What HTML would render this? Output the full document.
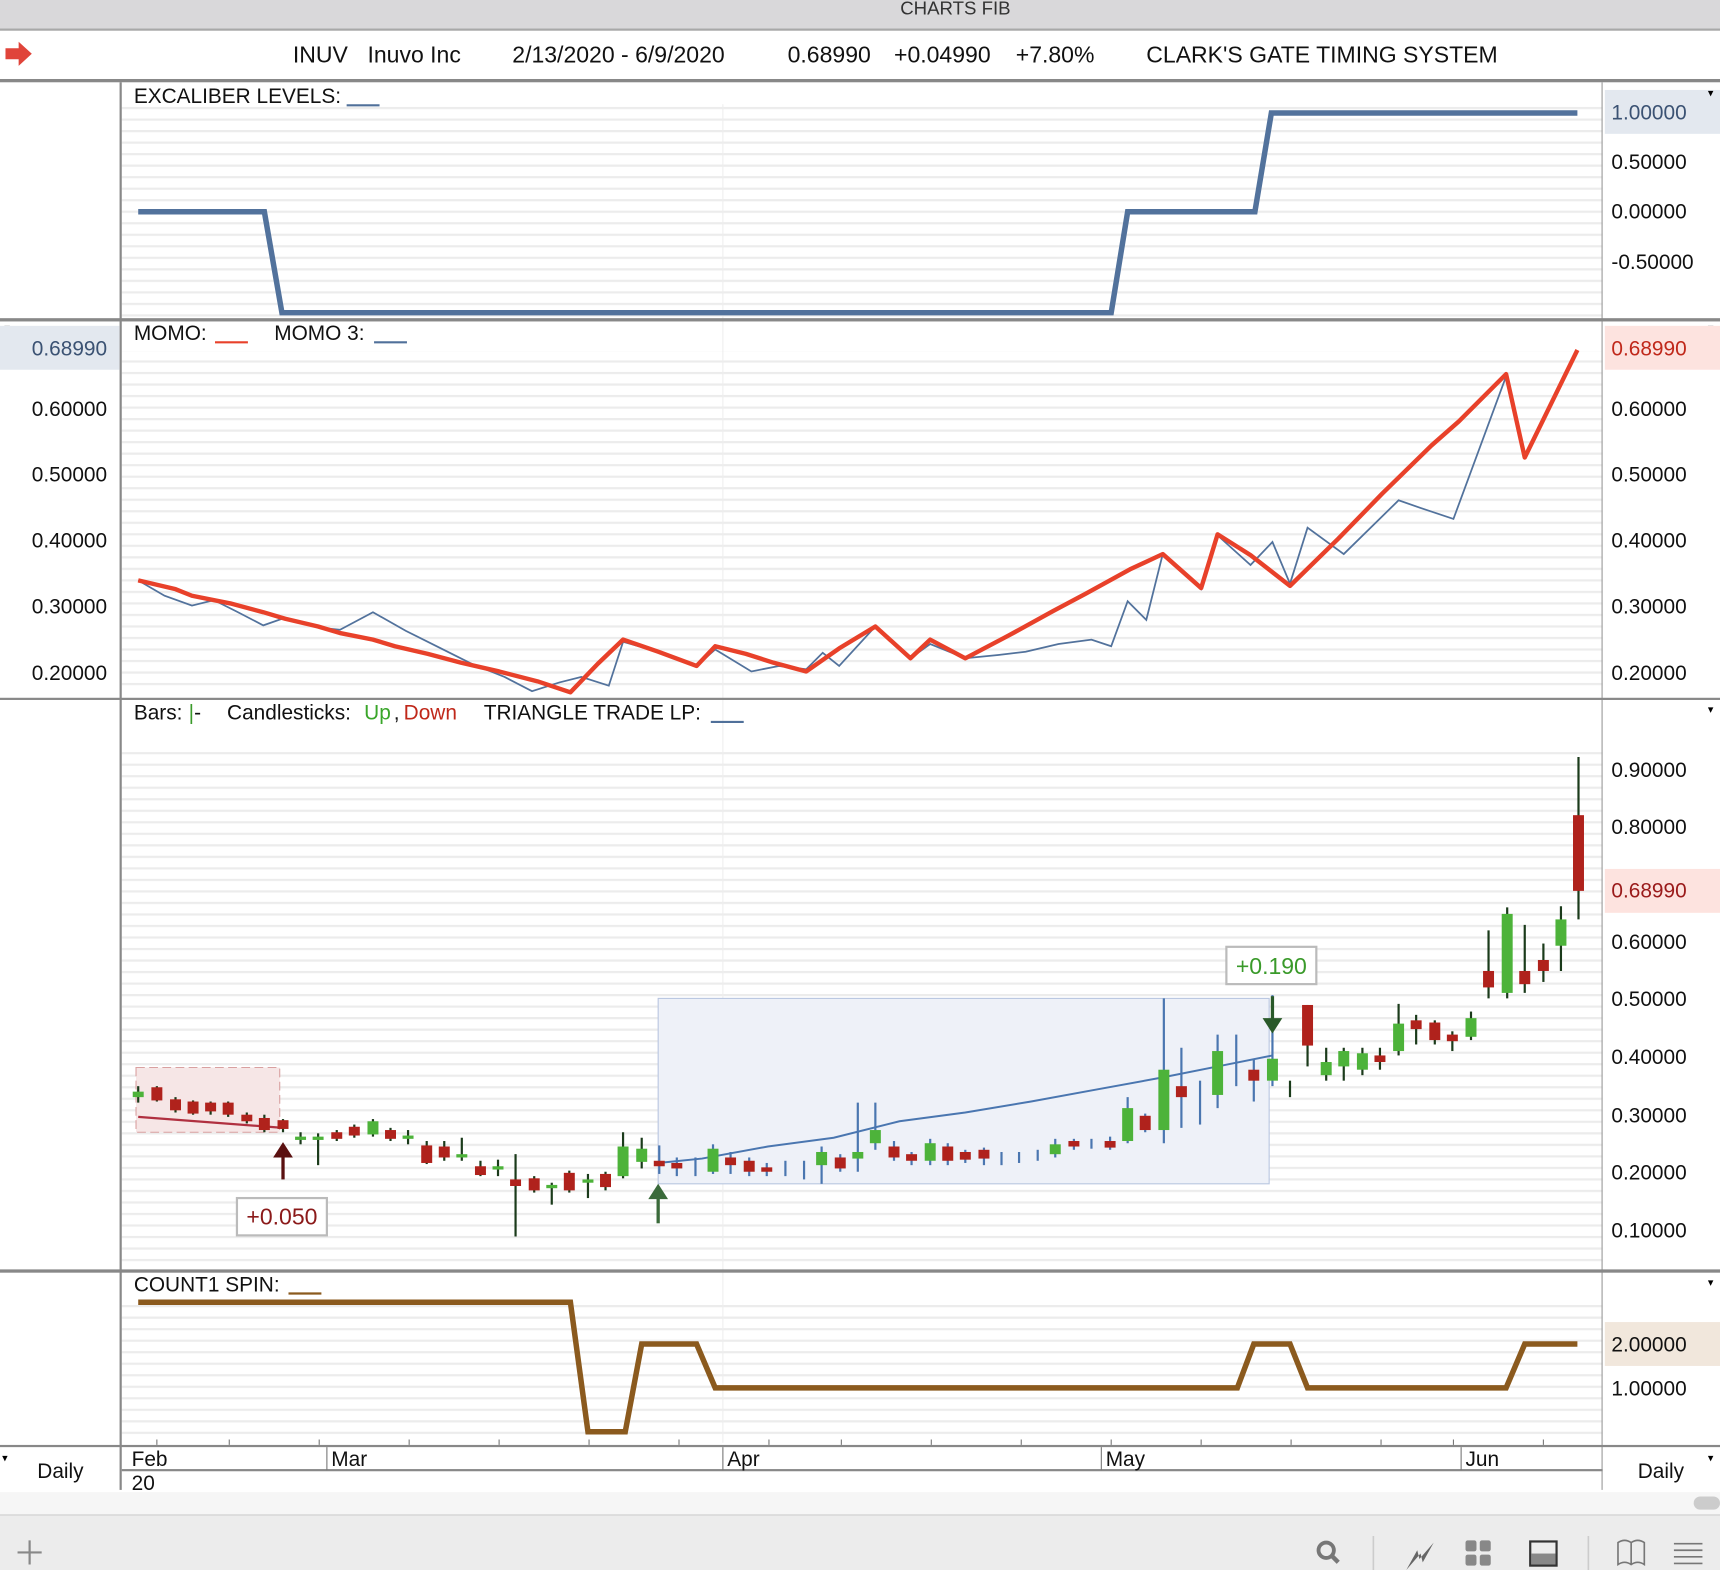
<!DOCTYPE html>
<html><head><meta charset="utf-8"><style>
html,body{margin:0;padding:0;background:#fff;overflow:hidden}
svg{display:block}
text{font-family:"Liberation Sans",sans-serif}
</style></head><body>
<svg width="1720" height="1570" viewBox="0 0 1568 1431" preserveAspectRatio="none" xmlns="http://www.w3.org/2000/svg">
<defs>
<pattern id="g" x="0" y="3" width="10" height="10.5" patternUnits="userSpaceOnUse"><rect x="0" y="0" width="10" height="2" fill="#ececec"/></pattern>
</defs>
<rect width="1568" height="1431" fill="#fff"/>
<!-- title -->
<rect x="0" y="0" width="1568" height="26" fill="#d9d8da"/>
<text x="871" y="13" font-size="17" text-anchor="middle" fill="#333">CHARTS FIB</text>
<rect x="0" y="26" width="1568" height="2" fill="#a8a8a8"/>
<!-- header -->
<path d="M5 44 h12 v-6 l12 11 l-12 11 v-6 h-12z" fill="#e0443a"/>
<g font-size="21" fill="#111">
<text x="267" y="57">INUV</text><text x="335" y="57">Inuvo Inc</text>
<text x="467" y="57">2/13/2020 - 6/9/2020</text>
<text x="718" y="57">0.68990</text><text x="815" y="57">+0.04990</text><text x="926" y="57">+7.80%</text>
<text x="1045" y="57">CLARK'S GATE TIMING SYSTEM</text>
</g>
<rect x="0" y="72" width="1568" height="3" fill="#888"/>
<!-- grids -->
<rect x="111" y="95" width="1350" height="195" fill="url(#g)"/>
<rect x="111" y="320" width="1350" height="312" fill="url(#g)"/>
<rect x="111" y="680" width="1350" height="475" fill="url(#g)"/>
<rect x="111" y="1183" width="1350" height="130" fill="url(#g)"/>
<line x1="659" y1="95" x2="659" y2="1315" stroke="#eee" stroke-width="1"/>
<!-- panel borders -->
<rect x="109" y="75" width="2" height="1283" fill="#888"/>
<rect x="1460" y="75" width="1" height="1283" fill="#999"/>
<rect x="0" y="290" width="1568" height="3" fill="#888"/>
<rect x="0" y="636" width="1568" height="2" fill="#888"/>
<rect x="0" y="1157" width="1568" height="3" fill="#888"/>
<rect x="0" y="1317" width="1568" height="2" fill="#888"/>
<rect x="111" y="1339" width="1350" height="2" fill="#888"/>
<!-- panel 1 -->
<text x="122" y="94" font-size="19" fill="#111">EXCALIBER LEVELS:</text>
<line x1="316" y1="96" x2="346" y2="96" stroke="#50709a" stroke-width="2"/>
<polyline points="126,193 241,193 257,285 1013,285 1028,193 1144,193 1159,103 1438,103" fill="none" stroke="#52729c" stroke-width="5"/>
<rect x="1463" y="82" width="105" height="40" fill="#e3e8ef"/>
<g font-size="19" fill="#111">
<text x="1469" y="109" fill="#3b5273">1.00000</text>
<text x="1469" y="154">0.50000</text><text x="1469" y="199">0.00000</text><text x="1469" y="245">-0.50000</text>
</g>
<text x="1557" y="88" font-size="10">▾</text>
<!-- panel 2 -->
<text x="122" y="310" font-size="19" fill="#111">MOMO:</text>
<line x1="196" y1="312" x2="226" y2="312" stroke="#e8412a" stroke-width="2"/>
<text x="250" y="310" font-size="19" fill="#111">MOMO 3:</text>
<line x1="341" y1="312" x2="371" y2="312" stroke="#50709a" stroke-width="2"/>
<text x="4" y="302" font-size="10">▾</text><text x="1557" y="302" font-size="10">▾</text>
<rect x="0" y="297" width="109" height="40" fill="#e3e8ef"/>
<rect x="1463" y="297" width="105" height="40" fill="#fde3df"/>
<g font-size="19" fill="#111">
<text x="29" y="324" fill="#3b5273">0.68990</text><text x="1469" y="324" fill="#c0281a">0.68990</text>
<text x="29" y="379">0.60000</text><text x="29" y="439">0.50000</text><text x="29" y="499">0.40000</text><text x="29" y="559">0.30000</text><text x="29" y="620">0.20000</text>
<text x="1469" y="379">0.60000</text><text x="1469" y="439">0.50000</text><text x="1469" y="499">0.40000</text><text x="1469" y="559">0.30000</text><text x="1469" y="620">0.20000</text>
</g>
<polyline points="126,529 150,543 175,552 195,547 215,557 240,570 260,563 290,572 310,574 340,558 370,575 400,590 430,605 460,617 485,630 510,622 530,617 555,625 568,585 600,594 635,607 652,592 685,612 710,607 735,610 750,595 765,607 798,571 830,600 848,587 880,600 910,597 935,594 965,587 995,583 1013,589 1028,548 1045,565 1060,505 1095,537 1110,488 1140,515 1160,494 1176,532 1192,481 1225,505 1275,456 1295,463 1325,473 1373,343" fill="none" stroke="#52729c" stroke-width="1.6"/>
<polyline points="126,529 160,537 175,543 210,550 240,558 260,564 290,571 310,577 340,583 360,589 390,596 420,604 455,612 490,621 520,631 545,605 568,583 600,594 635,607 652,589 680,596 705,604 735,612 765,591 798,571 830,600 848,583 880,600 920,579 960,557 990,541 1030,519 1060,505 1095,536 1110,487 1140,506 1176,534 1220,491 1260,450 1305,406 1330,384 1373,341 1390,417 1438,319" fill="none" stroke="#e8412a" stroke-width="4" stroke-linejoin="round"/>
<!-- panel 3 -->
<g font-size="19" fill="#111">
<text x="122" y="656">Bars:</text><text x="172" y="656" fill="#3a9a2a">|</text><text x="177" y="656">-</text>
<text x="207" y="656">Candlesticks:</text><text x="332" y="656" fill="#3aa62a">Up</text><text x="359" y="656">,</text><text x="368" y="656" fill="#c0281a">Down</text>
<text x="441" y="656">TRIANGLE TRADE LP:</text>
</g>
<line x1="648" y1="658" x2="678" y2="658" stroke="#50709a" stroke-width="2"/>
<text x="1557" y="650" font-size="10">▾</text>
<rect x="600" y="910" width="557" height="169" fill="#eef1f8" stroke="#b8c6e0"/>
<rect x="124" y="973" width="131" height="59" fill="#f6e6e6" stroke="#d9a0a0" stroke-dasharray="8 4"/>
<line x1="126" y1="1018" x2="258" y2="1028" stroke="#b03040" stroke-width="2"/>
<polyline points="600,1060 640,1056 700,1045 760,1037 820,1022 880,1014 940,1004 1000,993 1060,982 1110,972 1160,962" fill="none" stroke="#4a76b0" stroke-width="1.8"/>
<g stroke-width="2">
<g stroke="#1b3b1b">
<line x1="126" y1="990" x2="126" y2="1005"/><line x1="143" y1="990" x2="143" y2="1004"/><line x1="160" y1="1000" x2="160" y2="1014"/><line x1="176" y1="1003" x2="176" y2="1016"/><line x1="192" y1="1004" x2="192" y2="1016"/><line x1="208" y1="1004" x2="208" y2="1018"/><line x1="225" y1="1014" x2="225" y2="1024"/><line x1="241" y1="1016" x2="241" y2="1032"/><line x1="258" y1="1020" x2="258" y2="1032"/><line x1="274" y1="1032" x2="274" y2="1043"/><line x1="290" y1="1033" x2="290" y2="1062"/><line x1="307" y1="1030" x2="307" y2="1040"/><line x1="323" y1="1025" x2="323" y2="1037"/><line x1="340" y1="1020" x2="340" y2="1036"/><line x1="356" y1="1028" x2="356" y2="1040"/><line x1="372" y1="1030" x2="372" y2="1043"/><line x1="389" y1="1040" x2="389" y2="1061"/><line x1="405" y1="1040" x2="405" y2="1058"/><line x1="421" y1="1037" x2="421" y2="1058"/><line x1="438" y1="1058" x2="438" y2="1072"/><line x1="454" y1="1057" x2="454" y2="1072"/><line x1="470" y1="1052" x2="470" y2="1127"/><line x1="487" y1="1072" x2="487" y2="1087"/><line x1="503" y1="1078" x2="503" y2="1098"/><line x1="519" y1="1067" x2="519" y2="1087"/><line x1="536" y1="1070" x2="536" y2="1092"/><line x1="552" y1="1068" x2="552" y2="1085"/><line x1="568" y1="1032" x2="568" y2="1074"/><line x1="585" y1="1037" x2="585" y2="1065"/>
<line x1="1176" y1="985" x2="1176" y2="1000"/><line x1="1192" y1="916" x2="1192" y2="972"/><line x1="1209" y1="955" x2="1209" y2="985"/><line x1="1225" y1="955" x2="1225" y2="985"/><line x1="1242" y1="955" x2="1242" y2="980"/><line x1="1258" y1="955" x2="1258" y2="975"/><line x1="1275" y1="915" x2="1275" y2="962"/><line x1="1291" y1="925" x2="1291" y2="952"/><line x1="1308" y1="930" x2="1308" y2="952"/><line x1="1324" y1="940" x2="1324" y2="958"/><line x1="1341" y1="922" x2="1341" y2="948"/><line x1="1357" y1="848" x2="1357" y2="910"/><line x1="1374" y1="827" x2="1374" y2="910"/><line x1="1390" y1="843" x2="1390" y2="905"/><line x1="1407" y1="860" x2="1407" y2="895"/><line x1="1423" y1="826" x2="1423" y2="885"/><line x1="1439" y1="690" x2="1439" y2="838"/>
</g>
<g stroke="#4a76b0">
<line x1="601" y1="1044" x2="601" y2="1070"/><line x1="617" y1="1055" x2="617" y2="1072"/><line x1="634" y1="1055" x2="634" y2="1072"/><line x1="650" y1="1043" x2="650" y2="1070"/><line x1="666" y1="1050" x2="666" y2="1070"/><line x1="683" y1="1055" x2="683" y2="1072"/><line x1="699" y1="1060" x2="699" y2="1072"/><line x1="716" y1="1058" x2="716" y2="1072"/><line x1="733" y1="1058" x2="733" y2="1075"/><line x1="749" y1="1045" x2="749" y2="1079"/><line x1="766" y1="1052" x2="766" y2="1068"/><line x1="782" y1="1005" x2="782" y2="1068"/><line x1="798" y1="1005" x2="798" y2="1048"/><line x1="815" y1="1040" x2="815" y2="1058"/><line x1="831" y1="1050" x2="831" y2="1062"/><line x1="848" y1="1038" x2="848" y2="1062"/><line x1="864" y1="1042" x2="864" y2="1062"/><line x1="880" y1="1048" x2="880" y2="1060"/><line x1="897" y1="1046" x2="897" y2="1062"/><line x1="913" y1="1050" x2="913" y2="1062"/><line x1="929" y1="1050" x2="929" y2="1060"/><line x1="946" y1="1048" x2="946" y2="1058"/><line x1="962" y1="1038" x2="962" y2="1055"/><line x1="979" y1="1038" x2="979" y2="1048"/><line x1="995" y1="1038" x2="995" y2="1047"/><line x1="1012" y1="1036" x2="1012" y2="1048"/><line x1="1028" y1="1000" x2="1028" y2="1042"/><line x1="1044" y1="1015" x2="1044" y2="1032"/><line x1="1061" y1="910" x2="1061" y2="1042"/><line x1="1077" y1="955" x2="1077" y2="1028"/><line x1="1094" y1="985" x2="1094" y2="1025"/><line x1="1110" y1="943" x2="1110" y2="1010"/><line x1="1127" y1="943" x2="1127" y2="990"/><line x1="1143" y1="965" x2="1143" y2="1004"/><line x1="1160" y1="907" x2="1160" y2="990"/>
</g>
</g>
<g fill="#b0221c">
<rect x="138" y="991" width="10" height="12"/><rect x="155" y="1002" width="10" height="10"/><rect x="171" y="1004" width="10" height="11"/><rect x="187" y="1005" width="10" height="8"/><rect x="203" y="1005" width="10" height="11"/><rect x="220" y="1016" width="10" height="6"/><rect x="236" y="1019" width="10" height="11"/><rect x="253" y="1021" width="10" height="8"/><rect x="302" y="1032" width="10" height="6"/><rect x="318" y="1027" width="10" height="8"/><rect x="351" y="1030" width="10" height="8"/><rect x="384" y="1044" width="10" height="16"/><rect x="400" y="1045" width="10" height="10"/><rect x="433" y="1063" width="10" height="8"/><rect x="465" y="1075" width="10" height="6"/><rect x="482" y="1074" width="10" height="11"/><rect x="514" y="1069" width="10" height="16"/><rect x="547" y="1070" width="10" height="12"/>
<rect x="596" y="1058" width="10" height="5"/><rect x="612" y="1060" width="10" height="5"/><rect x="661" y="1055" width="10" height="7"/><rect x="678" y="1058" width="10" height="10"/><rect x="694" y="1064" width="10" height="4"/><rect x="761" y="1055" width="10" height="10"/><rect x="810" y="1045" width="10" height="10"/><rect x="826" y="1052" width="10" height="6"/><rect x="859" y="1045" width="10" height="13"/><rect x="875" y="1050" width="10" height="7"/><rect x="892" y="1048" width="10" height="8"/><rect x="974" y="1040" width="10" height="5"/><rect x="1007" y="1040" width="10" height="6"/><rect x="1039" y="1017" width="10" height="13"/><rect x="1072" y="990" width="10" height="10"/><rect x="1138" y="975" width="10" height="10"/><rect x="1187" y="916" width="10" height="37"/><rect x="1253" y="962" width="10" height="6"/><rect x="1286" y="930" width="10" height="8"/><rect x="1303" y="932" width="10" height="16"/><rect x="1319" y="943" width="10" height="6"/><rect x="1352" y="885" width="10" height="15"/><rect x="1385" y="885" width="10" height="12"/><rect x="1402" y="875" width="10" height="10"/><rect x="1434" y="743" width="10" height="69"/>
</g>
<g fill="#4db33a">
<rect x="121" y="995" width="10" height="5"/><rect x="269" y="1036" width="10" height="3"/><rect x="285" y="1036" width="10" height="3"/><rect x="335" y="1022" width="10" height="12"/><rect x="367" y="1035" width="10" height="3"/><rect x="416" y="1052" width="10" height="3"/><rect x="449" y="1063" width="10" height="3"/><rect x="498" y="1080" width="10" height="3"/><rect x="531" y="1075" width="10" height="3"/><rect x="563" y="1045" width="10" height="27"/><rect x="580" y="1047" width="10" height="12"/>
<rect x="645" y="1047" width="10" height="21"/><rect x="744" y="1050" width="10" height="12"/><rect x="777" y="1050" width="10" height="6"/><rect x="793" y="1030" width="10" height="12"/><rect x="843" y="1042" width="10" height="16"/><rect x="957" y="1043" width="10" height="9"/><rect x="1023" y="1010" width="10" height="30"/><rect x="1056" y="975" width="10" height="55"/><rect x="1105" y="958" width="10" height="40"/><rect x="1155" y="965" width="10" height="20"/><rect x="1204" y="968" width="10" height="12"/><rect x="1220" y="958" width="10" height="14"/><rect x="1237" y="960" width="10" height="15"/><rect x="1270" y="933" width="10" height="25"/><rect x="1336" y="928" width="10" height="17"/><rect x="1369" y="833" width="10" height="72"/><rect x="1418" y="838" width="10" height="24"/>
</g>
<!-- arrows -->
<path d="M258 1075 V1052" stroke="#5a1010" stroke-width="3"/><path d="M249 1055 l9 -14 l9 14z" fill="#5a1010"/>
<path d="M600 1115 V1090" stroke="#3a6a3a" stroke-width="3"/><path d="M591 1093 l9 -14 l9 14z" fill="#3a6a3a"/>
<path d="M1160 908 V930" stroke="#2a5a2a" stroke-width="3"/><path d="M1151 928 l9 14 l9 -14z" fill="#2a5a2a"/>
<rect x="216" y="1092" width="82" height="34" fill="#fff" stroke="#bbb" stroke-width="2"/>
<text x="257" y="1116" font-size="21" fill="#8b1a1a" text-anchor="middle">+0.050</text>
<rect x="1118" y="863" width="82" height="34" fill="#fff" stroke="#bbb" stroke-width="2"/>
<text x="1159" y="888" font-size="21" fill="#3a9a2a" text-anchor="middle">+0.190</text>
<rect x="1463" y="792" width="105" height="40" fill="#fde3df"/>
<g font-size="19" fill="#111">
<text x="1469" y="708">0.90000</text><text x="1469" y="760">0.80000</text><text x="1469" y="818" fill="#9a1a1a">0.68990</text><text x="1469" y="865">0.60000</text><text x="1469" y="917">0.50000</text><text x="1469" y="970">0.40000</text><text x="1469" y="1023">0.30000</text><text x="1469" y="1075">0.20000</text><text x="1469" y="1128">0.10000</text>
</g>
<!-- panel 4 -->
<text x="122" y="1177" font-size="19" fill="#111">COUNT1 SPIN:</text>
<line x1="263" y1="1179" x2="293" y2="1179" stroke="#8b5a1e" stroke-width="2"/>
<text x="1557" y="1172" font-size="10">▾</text>
<polyline points="126,1187 520,1187 536,1305 570,1305 585,1225 635,1225 652,1265 1128,1265 1143,1225 1176,1225 1192,1265 1373,1265 1390,1225 1438,1225" fill="none" stroke="#8b5a1e" stroke-width="5"/>
<rect x="1463" y="1205" width="105" height="40" fill="#f1e7dc"/>
<text x="1469" y="1232" font-size="19" fill="#111">2.00000</text><text x="1469" y="1272" font-size="19" fill="#111">1.00000</text>
<!-- date axis -->
<g stroke="#777" stroke-width="1">
<path d="M143 1312v5M209 1312v5M291 1312v5M373 1312v5M455 1312v5M537 1312v5M619 1312v5M701 1312v5M767 1312v5M849 1312v5M931 1312v5M1013 1312v5M1095 1312v5M1177 1312v5M1259 1312v5M1325 1312v5M1407 1312v5"/>
<path d="M298 1319v21M659 1319v21M1004 1319v21M1332 1319v21"/>
</g>
<g font-size="19" fill="#111">
<text x="120" y="1336">Feb</text><text x="302" y="1336">Mar</text><text x="663" y="1336">Apr</text><text x="1008" y="1336">May</text><text x="1336" y="1336">Jun</text>
<text x="120" y="1358">20</text>
<text x="34" y="1347">Daily</text><text x="1493" y="1347">Daily</text>
</g>
<text x="2" y="1332" font-size="10">▾</text><text x="1557" y="1332" font-size="10">▾</text>
<!-- scroll + toolbar -->
<rect x="0" y="1360" width="1568" height="20" fill="#f6f6f6"/>
<rect x="1544" y="1364" width="24" height="12" rx="6" fill="#ccc"/>
<rect x="0" y="1380" width="1568" height="2" fill="#dcdcdc"/>
<rect x="0" y="1382" width="1568" height="49" fill="#ececec"/>
<path d="M27 1404v22M16 1415h22" stroke="#888" stroke-width="2"/>
<circle cx="1209" cy="1413" r="7" fill="none" stroke="#777" stroke-width="3.5"/><path d="M1214 1418l6 6" stroke="#777" stroke-width="4"/>
<path d="M1252 1400v31M1448 1400v31" stroke="#ccc" stroke-width="1.5"/>
<path d="M1282 1431l10 -18l2 8l13 -15l-10 18l-2 -8z" fill="#666"/>
<g fill="#888"><rect x="1336" y="1404" width="10" height="10" rx="2"/><rect x="1349" y="1404" width="10" height="10" rx="2"/><rect x="1336" y="1417" width="10" height="10" rx="2"/><rect x="1349" y="1417" width="10" height="10" rx="2"/></g>
<rect x="1395" y="1405" width="24" height="22" fill="none" stroke="#333" stroke-width="2"/><rect x="1396" y="1416" width="22" height="10" fill="#888"/>
<path d="M1475 1426v-20q6 -4 12 0q6 -4 12 0v20q-6 -4 -12 0q-6 -4 -12 0zM1487 1406v20" fill="none" stroke="#777" stroke-width="1.5"/>
<path d="M1526 1407h26M1526 1413h26M1526 1419h26M1526 1425h26" stroke="#777" stroke-width="1.5"/>
</svg>
</body></html>
